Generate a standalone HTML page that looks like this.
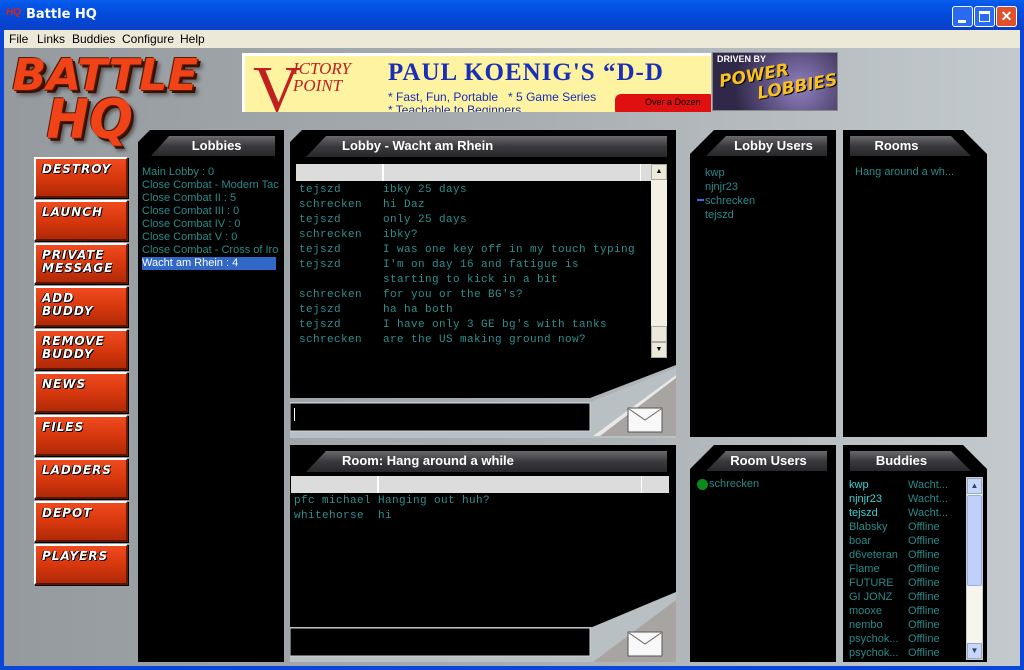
<!DOCTYPE html>
<html><head><meta charset="utf-8"><style>
*{margin:0;padding:0;box-sizing:border-box}
body{width:1024px;height:670px;overflow:hidden;position:relative;font-family:"Liberation Sans",sans-serif;background:#0a46d8}
.a{position:absolute}
#title{left:0;top:0;width:1024px;height:30px;background:linear-gradient(#0a5ff0,#0555e6 15%,#0348d6 60%,#0a3fc8);color:#fff;font:bold 13px "DejaVu Sans","Liberation Sans",sans-serif}
#menu{left:4px;top:30px;width:1016px;height:18px;background:#ece9d8;font:12px "Liberation Sans",sans-serif;color:#000}
#menu span{position:absolute;top:2px}
#body{left:4px;top:48px;width:1016px;height:618px;background:linear-gradient(90deg,#959a9e,#a7adb1 50%,#c3cacd)}
.blk{background:#000}
.hd{background:linear-gradient(#6a6a6e,#3a3a3e 50%,#28282b);color:#fff;font:bold 13px "Liberation Sans",sans-serif;text-align:center;line-height:19px}
.btn{left:34px;width:94px;height:41px;background:linear-gradient(#f04a20,#d8380e 50%,#b02a08);border:2px solid #fff;border-right-color:#6a1a05;border-bottom-color:#5a1504;color:#fff;font:italic bold 12px "DejaVu Sans",sans-serif;letter-spacing:1px;padding:4px 6px;line-height:13px;text-shadow:1px 1px 0 #000,-1px 0 #000;box-shadow:1px 1px 0 #000}
.ls{font:11px "Liberation Sans",sans-serif;color:#2a8a8a;line-height:13px}
.mono{font:11px "Liberation Mono",monospace;letter-spacing:0.4px;color:#2f8f8f;line-height:15px}
.colh{background:#dcdcdc;height:17px}
.logo{font:italic 900 44px 'DejaVu Sans',sans-serif;color:#f04418;text-shadow:-1px -1px 0 #5a1a08,1px 1px 0 #5a1a08,3px 3px 0 #3a1006,5px 5px 4px #555;white-space:nowrap}
</style></head><body>
<div id="title" class="a"><span class="a" style="left:6px;top:7px;color:#e02010;font:italic bold 10px sans-serif">HQ</span><span class="a" style="left:26px;top:7px">Battle HQ</span>
<div class="a" style="left:952px;top:6px;width:21px;height:21px;background:#2a6af0;border:1px solid #fff;border-radius:3px"><div class="a" style="left:5px;top:13px;width:8px;height:3px;background:#fff"></div></div>
<div class="a" style="left:974px;top:6px;width:21px;height:21px;background:#2a6af0;border:1px solid #fff;border-radius:3px"><div class="a" style="left:4px;top:4px;width:11px;height:11px;border:1px solid #fff;border-top-width:3px"></div></div>
<div class="a" style="left:996px;top:6px;width:21px;height:21px;background:#e0502a;border:1px solid #fff;border-radius:3px;color:#fff;font:bold 14px sans-serif;text-align:center;line-height:19px">✕</div>
</div>
<div id="menu" class="a"><span style="left:5px">File</span><span style="left:33px">Links</span><span style="left:68px">Buddies</span><span style="left:118px">Configure</span><span style="left:176px">Help</span></div>
<div id="body" class="a"></div>
<div class="a logo" style="left:14px;top:50px;transform:scaleX(1.02)">BATTLE</div>
<div class="a logo" style="left:44px;top:88px;font-size:54px;transform:scaleX(0.95)">HQ</div>
<div class="a" style="left:242px;top:53px;width:469px;height:59px;background:#fff;padding:3px 0 0 3px"><div style="width:466px;height:56px;background:#fdf3a0;position:relative;overflow:hidden">
<span class="a" style="left:8px;top:-4px;font:66px 'Liberation Serif',serif;color:#c02020">V</span>
<span class="a" style="left:48px;top:4px;font:italic 17px 'Liberation Serif',serif;color:#c02020;line-height:17px">ICTORY<br>POINT</span>
<span class="a" style="left:143px;top:3px;font:bold 25px 'Liberation Serif',serif;color:#1a2eb8;white-space:nowrap;letter-spacing:1px">PAUL KOENIG'S “D-D</span>
<span class="a" style="left:143px;top:34px;font:12px 'Liberation Sans',sans-serif;color:#1a2eb8;white-space:nowrap">* Fast, Fun, Portable &nbsp; * 5 Game Series</span>
<span class="a" style="left:143px;top:47px;font:12px 'Liberation Sans',sans-serif;color:#1a2eb8;white-space:nowrap">* Teachable to Beginners</span>
<div class="a" style="left:370px;top:38px;width:100px;height:22px;background:#e01010;border-radius:6px;font:9px sans-serif;color:#000;padding:3px 0 0 30px">Over a Dozen</div>
</div></div>
<div class="a" style="left:712px;top:52px;width:126px;height:59px;background:radial-gradient(circle at 70% 60%,#9080c0,#302848 70%);border:1px solid #888">
<span class="a" style="left:4px;top:1px;font:bold 9px sans-serif;color:#fff">DRIVEN BY</span>
<span class="a" style="left:6px;top:13px;font:italic 900 17px 'DejaVu Sans',sans-serif;color:#f8c020;text-shadow:1px 1px 0 #000;transform:rotate(-10deg)">POWER</span>
<span class="a" style="left:44px;top:24px;font:italic 900 17px 'DejaVu Sans',sans-serif;color:#f8c020;text-shadow:1px 1px 0 #000;transform:rotate(-10deg)">LOBBIES</span></div>

<div class="a btn" style="top:157px">DESTROY</div>
<div class="a btn" style="top:200px">LAUNCH</div>
<div class="a btn" style="top:243px">PRIVATE<br>MESSAGE</div>
<div class="a btn" style="top:286px">ADD<br>BUDDY</div>
<div class="a btn" style="top:329px">REMOVE<br>BUDDY</div>
<div class="a btn" style="top:372px">NEWS</div>
<div class="a btn" style="top:415px">FILES</div>
<div class="a btn" style="top:458px">LADDERS</div>
<div class="a btn" style="top:501px">DEPOT</div>
<div class="a btn" style="top:544px">PLAYERS</div>

<!-- Lobbies -->
<div class="a blk" style="left:138px;top:130px;width:146px;height:532px;clip-path:polygon(0 12px,12px 0,100% 0,100% 100%,0 100%)"></div>
<div class="a hd" style="left:151px;top:136px;width:124px;height:20px;clip-path:polygon(18px 0,100% 0,100% 100%,0 100%)">&nbsp;&nbsp;Lobbies</div>
<div class="a ls" style="left:142px;top:166px;width:137px;white-space:nowrap;overflow:hidden">Main Lobby : 0<br>Close Combat - Modern Tact<br>Close Combat II : 5<br>Close Combat III : 0<br>Close Combat IV : 0<br>Close Combat V : 0<br>Close Combat - Cross of Iron<br><div style="background:#3168c8;color:#fff;width:136px;margin-left:-2px;padding-left:2px">Wacht am Rhein : 4</div></div>

<!-- Lobby chat -->
<div class="a blk" style="left:290px;top:130px;width:386px;height:268px;clip-path:polygon(0 12px,12px 0,100% 0,100% 235px,300px 100%,0 100%)"></div>
<div class="a hd" style="left:306px;top:136px;width:361px;height:21px;text-align:left;padding-left:36px;clip-path:polygon(20px 0,100% 0,100% 100%,0 100%)">Lobby - Wacht am Rhein</div>
<div class="a colh" style="left:296px;top:164px;width:344px"><div class="a" style="left:86px;top:0;width:2px;height:17px;background:#fff"></div></div>
<div class="a colh" style="left:640px;top:164px;width:11px;border-left:1px solid #fff"></div>
<div class="a" style="left:651px;top:164px;width:16px;height:194px;background:#f4f1e4"><div style="height:16px;background:#ece9d8;border:1px solid #aaa;font-size:7px;text-align:center;line-height:14px">▲</div><div class="a" style="left:0;top:162px;width:16px;height:16px;background:#ece9d8;border:1px solid #aaa"></div><div class="a" style="left:0;top:178px;width:16px;height:16px;background:#ece9d8;border:1px solid #aaa;font-size:7px;text-align:center;line-height:14px">▼</div></div>
<div class="a mono" style="left:299px;top:183px;white-space:pre">tejszd      ibky 25 days
schrecken   hi Daz
tejszd      only 25 days
schrecken   ibky?
tejszd      I was one key off in my touch typing
tejszd      I'm on day 16 and fatigue is
            starting to kick in a bit
schrecken   for you or the BG's?
tejszd      ha ha both
tejszd      I have only 3 GE bg's with tanks
schrecken   are the US making ground now?</div>
<svg class="a" style="left:290px;top:360px" width="388" height="80"><polygon points="0,42 300,42 386,8 386,78 300,78 0,78" fill="#b8c0c4"/><polygon points="303,76 386,15 386,76" fill="#a8a4a2"/><polygon points="303,76 386,15 386,18 310,76" fill="#e8e8e8"/><rect x="0" y="43" width="300" height="28" fill="#000" stroke="#d0d4d6"/><rect x="4" y="48" width="1" height="13" fill="#fff"/><rect x="338" y="48" width="34" height="24" fill="#f8f8f8" stroke="#555"/><polyline points="339,49 355,60 371,49" fill="none" stroke="#666"/></svg>

<!-- Room chat -->
<div class="a blk" style="left:290px;top:445px;width:386px;height:182px;clip-path:polygon(0 0,100% 0,100% 150px,310px 100%,0 100%)"></div>
<div class="a hd" style="left:306px;top:451px;width:361px;height:21px;text-align:left;padding-left:36px;clip-path:polygon(20px 0,100% 0,100% 100%,0 100%)">Room: Hang around a while</div>
<div class="a colh" style="left:291px;top:476px;width:378px"><div class="a" style="left:86px;top:0;width:2px;height:17px;background:#fff"></div><div class="a" style="left:350px;top:0;width:1px;height:17px;background:#fff"></div></div>
<div class="a mono" style="left:294px;top:494px;white-space:pre">pfc michael Hanging out huh?
whitehorse  hi</div>
<svg class="a" style="left:290px;top:590px" width="388" height="76"><polygon points="0,38 300,38 386,2 386,72 0,72" fill="#b8c0c4"/><polygon points="303,72 386,10 386,72" fill="#a8a4a2"/><rect x="0" y="38" width="300" height="28" fill="#000" stroke="#d0d4d6"/><rect x="338" y="42" width="34" height="24" fill="#f8f8f8" stroke="#555"/><polyline points="339,43 355,54 371,43" fill="none" stroke="#666"/></svg>

<!-- Lobby users -->
<div class="a blk" style="left:690px;top:130px;width:146px;height:307px;clip-path:polygon(0 24px,24px 0,100% 0,100% 100%,0 100%)"></div>
<div class="a hd" style="left:706px;top:136px;width:121px;height:20px;padding-left:14px;clip-path:polygon(20px 0,100% 0,100% 100%,0 100%)">Lobby Users</div>
<div class="a ls" style="left:705px;top:166px;line-height:14px">kwp<br>njnjr23<br>schrecken<br>tejszd</div>
<div class="a" style="left:697px;top:199px;width:7px;height:2px;background:#3a6ae0"></div>
<!-- Rooms -->
<div class="a blk" style="left:843px;top:130px;width:144px;height:307px;clip-path:polygon(0 0,calc(100% - 24px) 0,100% 24px,100% 100%,0 100%)"></div>
<div class="a hd" style="left:850px;top:136px;width:121px;height:20px;padding-right:28px;clip-path:polygon(0 0,calc(100% - 20px) 0,100% 100%,0 100%)">Rooms</div>
<div class="a ls" style="left:855px;top:166px">Hang around a wh...</div>
<!-- Room users -->
<div class="a blk" style="left:690px;top:445px;width:146px;height:217px;clip-path:polygon(0 24px,24px 0,100% 0,100% 100%,0 100%)"></div>
<div class="a hd" style="left:706px;top:451px;width:121px;height:20px;padding-left:4px;clip-path:polygon(20px 0,100% 0,100% 100%,0 100%)">Room Users</div>
<div class="a" style="left:697px;top:479px;width:11px;height:11px;border-radius:50%;background:#0a8a1a"></div>
<div class="a ls" style="left:709px;top:478px">schrecken</div>
<!-- Buddies -->
<div class="a blk" style="left:843px;top:445px;width:144px;height:217px;clip-path:polygon(0 0,calc(100% - 24px) 0,100% 24px,100% 100%,0 100%)"></div>
<div class="a hd" style="left:850px;top:451px;width:121px;height:20px;padding-right:18px;clip-path:polygon(0 0,calc(100% - 20px) 0,100% 100%,0 100%)">Buddies</div>
<div class="a ls" style="left:849px;top:478px;line-height:14px;white-space:nowrap"><span style="color:#40d0d0">kwp<br>njnjr23<br>tejszd</span><br>Blabsky<br>boar<br>d6veteran<br>Flame<br>FUTURE<br>GI JONZ<br>mooxe<br>nembo<br>psychok...<br>psychok...</div>
<div class="a ls" style="left:908px;top:478px;line-height:14px;white-space:nowrap">Wacht...<br>Wacht...<br>Wacht...<br>Offline<br>Offline<br>Offline<br>Offline<br>Offline<br>Offline<br>Offline<br>Offline<br>Offline<br>Offline</div>
<div class="a" style="left:966px;top:477px;width:17px;height:183px;background:#f6f5ee;border:1px solid #ccc">
<div style="height:16px;background:#c6d6fc;border:1px solid #9ab;font-size:8px;text-align:center;color:#345;line-height:14px">▲</div>
<div class="a" style="left:0;top:17px;width:15px;height:91px;background:#c0d0fa;border:1px solid #9ab0e0;border-radius:2px"></div>
<div class="a" style="left:0;top:165px;width:15px;height:16px;background:#c6d6fc;border:1px solid #9ab;font-size:8px;text-align:center;color:#345;line-height:14px">▼</div></div>
</body></html>
